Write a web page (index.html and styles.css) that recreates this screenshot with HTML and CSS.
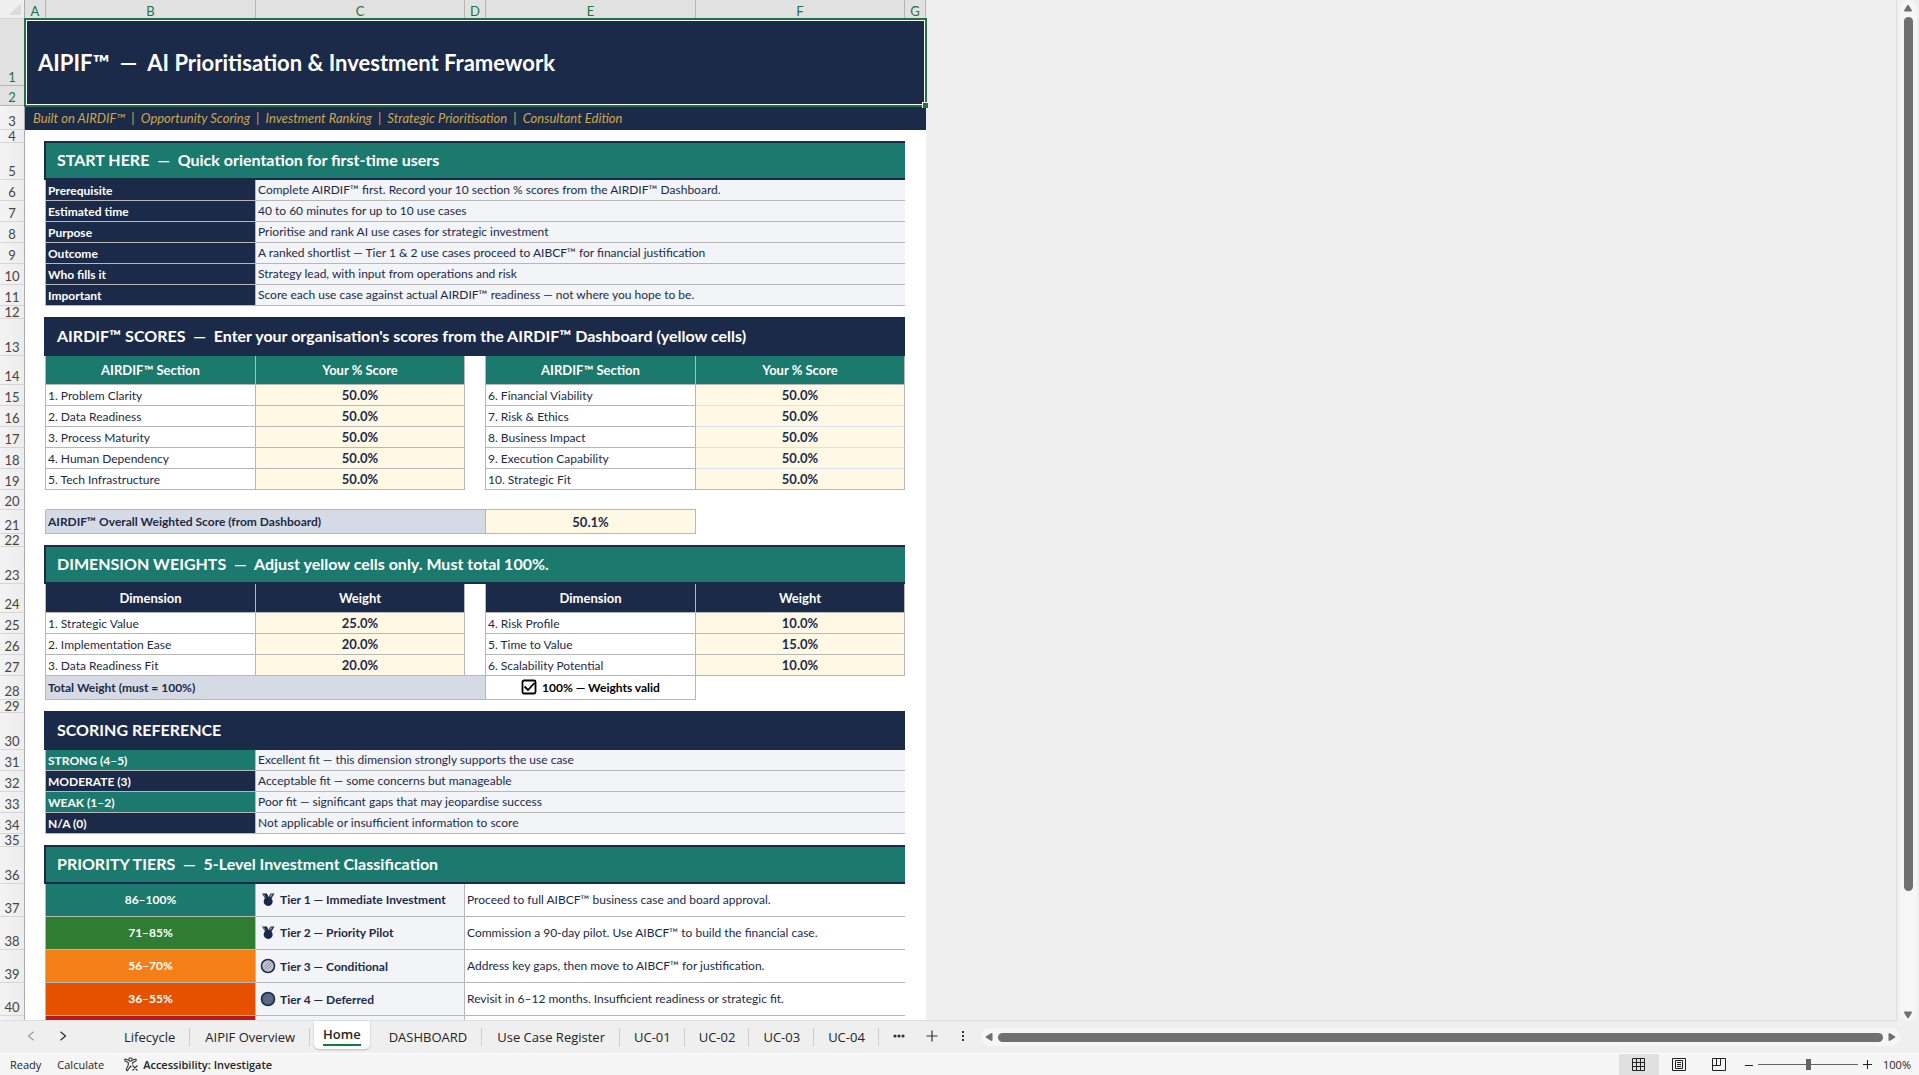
FILE: index.html
```html
<!DOCTYPE html>
<html lang="en">
<head>
<meta charset="utf-8">
<title>AIPIF – Home</title>
<link rel="stylesheet" href="styles.css">
</head>
<body>
<svg class="defs" aria-hidden="true">
  <symbol id="medal" viewBox="0 0 14 14">
    <path d="M1 0.5h5l1.5 3.5L9.5 0.5h4L10.5 5.5A4.5 4.5 0 1 1 4 5.3z" fill="#1c2a4a"/>
    <path d="M9.8 1.3h2L9.7 4.3l-1.200-.5z" fill="#8d95a8"/>
    <path d="M2.500 1.300l2.300 3" stroke="#7a849b" fill="none"/>
  </symbol>
  <symbol id="disc" viewBox="0 0 16 16">
    <circle cx="8" cy="8" r="6.500" fill="currentColor" stroke="#1c2a4a" stroke-width="1.600"/>
    <path d="M3.500 9.500l6-6M4.500 11.500l7-7M6.500 12.500l6-6" stroke="#6f7d92" stroke-width=".7"/>
  </symbol>
</svg>
<main class="workspace">
  <div class="sheet">
    <table class="grid">
      <colgroup>
        <col class="c-num"><col class="c-gap"><col class="c-wide"><col class="c-mid"><col class="c-gap"><col class="c-wide"><col class="c-mid"><col class="c-gap">
      </colgroup>
      <thead>
        <tr class="letters"><th class="corner"><svg width="12" height="12" viewBox="0 0 12 12"><path d="M12 0v12H0z" fill="#dcdcdc"/></svg></th><th>A</th><th>B</th><th>C</th><th>D</th><th>E</th><th>F</th><th>G</th></tr>
      </thead>
      <tbody>
        <tr class="h67 picked"><th>1</th><td class="title" colspan="7" rowspan="2">AIPIF™ &nbsp;—&nbsp; AI Prioritisation &amp; Investment Framework<span class="handle"></span></td></tr>
        <tr class="h20 picked"><th>2</th></tr>
        <tr class="h24"><th>3</th><td class="subtitle" colspan="7">Built on AIRDIF™ &nbsp;|&nbsp; Opportunity Scoring &nbsp;|&nbsp; Investment Ranking &nbsp;|&nbsp; Strategic Prioritisation &nbsp;|&nbsp; Consultant Edition</td></tr>
        <tr class="h13"><th>4</th><td colspan="7"></td></tr>

        <tr class="h37"><th>5</th><td></td><td class="bar teal" colspan="5">START HERE &nbsp;—&nbsp; Quick orientation for first-time users</td><td></td></tr>
        <tr class="h21"><th>6</th><td></td><td class="cell key navy">Prerequisite</td><td class="cell note" colspan="4">Complete AIRDIF™ first. Record your 10 section % scores from the AIRDIF™ Dashboard.</td><td></td></tr>
        <tr class="h21"><th>7</th><td></td><td class="cell key navy">Estimated time</td><td class="cell note" colspan="4">40 to 60 minutes for up to 10 use cases</td><td></td></tr>
        <tr class="h21"><th>8</th><td></td><td class="cell key navy">Purpose</td><td class="cell note" colspan="4">Prioritise and rank AI use cases for strategic investment</td><td></td></tr>
        <tr class="h21"><th>9</th><td></td><td class="cell key navy">Outcome</td><td class="cell note" colspan="4">A ranked shortlist — Tier 1 &amp; 2 use cases proceed to AIBCF™ for financial justification</td><td></td></tr>
        <tr class="h21"><th>10</th><td></td><td class="cell key navy">Who fills it</td><td class="cell note" colspan="4">Strategy lead, with input from operations and risk</td><td></td></tr>
        <tr class="h21"><th>11</th><td></td><td class="cell key navy">Important</td><td class="cell note" colspan="4">Score each use case against actual AIRDIF™ readiness — not where you hope to be.</td><td></td></tr>
        <tr class="h13"><th>12</th><td colspan="7"></td></tr>

        <tr class="h37"><th>13</th><td></td><td class="bar navy" colspan="5">AIRDIF™ SCORES &nbsp;—&nbsp; Enter your organisation's scores from the AIRDIF™ Dashboard (yellow cells)</td><td></td></tr>
        <tr class="h29"><th>14</th><td></td><td class="cell head teal">AIRDIF™ Section</td><td class="cell head teal">Your % Score</td><td></td><td class="cell head teal">AIRDIF™ Section</td><td class="cell head teal">Your % Score</td><td></td></tr>
        <tr class="h21"><th>15</th><td></td><td class="cell item">1. Problem Clarity</td><td class="cell score">50.0%</td><td></td><td class="cell item">6. Financial Viability</td><td class="cell score soft">50.0%</td><td></td></tr>
        <tr class="h21"><th>16</th><td></td><td class="cell item">2. Data Readiness</td><td class="cell score">50.0%</td><td></td><td class="cell item">7. Risk &amp; Ethics</td><td class="cell score soft">50.0%</td><td></td></tr>
        <tr class="h21"><th>17</th><td></td><td class="cell item">3. Process Maturity</td><td class="cell score">50.0%</td><td></td><td class="cell item">8. Business Impact</td><td class="cell score soft">50.0%</td><td></td></tr>
        <tr class="h21"><th>18</th><td></td><td class="cell item">4. Human Dependency</td><td class="cell score">50.0%</td><td></td><td class="cell item">9. Execution Capability</td><td class="cell score soft">50.0%</td><td></td></tr>
        <tr class="h21"><th>19</th><td></td><td class="cell item">5. Tech Infrastructure</td><td class="cell score">50.0%</td><td></td><td class="cell item">10. Strategic Fit</td><td class="cell score">50.0%</td><td></td></tr>
        <tr class="h20"><th>20</th><td colspan="7"></td></tr>
        <tr class="h24"><th>21</th><td></td><td class="cell total topped" colspan="3">AIRDIF™ Overall Weighted Score (from Dashboard)</td><td class="cell score topped">50.1%</td><td></td><td></td></tr>
        <tr class="h13"><th>22</th><td colspan="7"></td></tr>

        <tr class="h37"><th>23</th><td></td><td class="bar teal" colspan="5">DIMENSION WEIGHTS &nbsp;—&nbsp; Adjust yellow cells only. Must total 100%.</td><td></td></tr>
        <tr class="h29"><th>24</th><td></td><td class="cell head navy">Dimension</td><td class="cell head navy">Weight</td><td></td><td class="cell head navy">Dimension</td><td class="cell head navy">Weight</td><td></td></tr>
        <tr class="h21"><th>25</th><td></td><td class="cell item">1. Strategic Value</td><td class="cell score">25.0%</td><td></td><td class="cell item">4. Risk Profile</td><td class="cell score">10.0%</td><td></td></tr>
        <tr class="h21"><th>26</th><td></td><td class="cell item">2. Implementation Ease</td><td class="cell score">20.0%</td><td></td><td class="cell item">5. Time to Value</td><td class="cell score">15.0%</td><td></td></tr>
        <tr class="h21"><th>27</th><td></td><td class="cell item">3. Data Readiness Fit</td><td class="cell score">20.0%</td><td></td><td class="cell item">6. Scalability Potential</td><td class="cell score">10.0%</td><td></td></tr>
        <tr class="h24"><th>28</th><td></td><td class="cell total topped" colspan="3">Total Weight (must = 100%)</td><td class="cell valid"><svg width="16" height="16" viewBox="0 0 16 16" fill="none" stroke="#000" stroke-width="1.800"><rect x="1.500" y="1.500" width="13" height="13" rx="1.500"/><path d="M3.500 7.500l3.500 3.500 6.500-7"/></svg>100% — Weights valid</td><td></td><td></td></tr>
        <tr class="h13"><th>29</th><td colspan="7"></td></tr>

        <tr class="h37"><th>30</th><td></td><td class="bar navy" colspan="5">SCORING REFERENCE</td><td></td></tr>
        <tr class="h21"><th>31</th><td></td><td class="cell key teal">STRONG (4–5)</td><td class="cell note" colspan="4">Excellent fit — this dimension strongly supports the use case</td><td></td></tr>
        <tr class="h21"><th>32</th><td></td><td class="cell key navy">MODERATE (3)</td><td class="cell note" colspan="4">Acceptable fit — some concerns but manageable</td><td></td></tr>
        <tr class="h21"><th>33</th><td></td><td class="cell key teal">WEAK (1–2)</td><td class="cell note" colspan="4">Poor fit — significant gaps that may jeopardise success</td><td></td></tr>
        <tr class="h21"><th>34</th><td></td><td class="cell key navy">N/A (0)</td><td class="cell note" colspan="4">Not applicable or insufficient information to score</td><td></td></tr>
        <tr class="h13"><th>35</th><td colspan="7"></td></tr>

        <tr class="h37"><th>36</th><td></td><td class="bar teal" colspan="5">PRIORITY TIERS &nbsp;—&nbsp; 5-Level Investment Classification</td><td></td></tr>
        <tr class="h33"><th>37</th><td></td><td class="cell band teal">86–100%</td><td class="cell tier"><svg class="ico" width="16" height="14"><use href="#medal"/></svg>Tier 1 — Immediate Investment</td><td class="cell desc" colspan="3">Proceed to full AIBCF™ business case and board approval.</td><td></td></tr>
        <tr class="h33"><th>38</th><td></td><td class="cell band green">71–85%</td><td class="cell tier"><svg class="ico" width="16" height="14"><use href="#medal"/></svg>Tier 2 — Priority Pilot</td><td class="cell desc" colspan="3">Commission a 90-day pilot. Use AIBCF™ to build the financial case.</td><td></td></tr>
        <tr class="h33"><th>39</th><td></td><td class="cell band amber">56–70%</td><td class="cell tier"><svg class="ico light" width="16" height="16"><use href="#disc"/></svg>Tier 3 — Conditional</td><td class="cell desc" colspan="3">Address key gaps, then move to AIBCF™ for justification.</td><td></td></tr>
        <tr class="h33"><th>40</th><td></td><td class="cell band orange">36–55%</td><td class="cell tier"><svg class="ico dark" width="16" height="16"><use href="#disc"/></svg>Tier 4 — Deferred</td><td class="cell desc" colspan="3">Revisit in 6–12 months. Insufficient readiness or strategic fit.</td><td></td></tr>
        <tr class="h33"><th></th><td></td><td class="cell band red"></td><td class="cell tier"></td><td class="cell desc" colspan="3"></td><td></td></tr>
      </tbody>
    </table>
  </div>
  <div class="vscroll">
    <svg width="10" height="8" viewBox="0 0 10 8"><path d="M5 0.500Q5.500 .5 9 6.500Q9 7.500 8 7.500H2Q1 7.500 1 6.500Q4.500 .5 5 .5z" fill="#707070"/></svg>
    <span class="thumb"></span><span class="rest"></span>
    <svg width="10" height="8" viewBox="0 0 10 8"><path d="M5 7.500Q5.500 7.500 9 1.500Q9 .5 8 .5H2Q1 .5 1 1.500Q4.500 7.500 5 7.500z" fill="#707070"/></svg>
  </div>
</main>
<nav class="tabbar">
  <div class="arrows">
    <button aria-label="Previous sheets" disabled><svg width="8" height="10" viewBox="0 0 8 10"><path d="M6.500 .8L1.500 5l5 4.200" fill="none" stroke="#9a9a9a" stroke-width="1.200"/></svg></button>
    <button aria-label="Next sheets"><svg width="8" height="10" viewBox="0 0 8 10"><path d="M1.500 .8L6.500 5l-5 4.200" fill="none" stroke="#333" stroke-width="1.300"/></svg></button>
  </div>
  <button class="tab">Lifecycle</button>
  <button class="tab">AIPIF Overview</button>
  <button class="tab current"><span>Home</span></button>
  <button class="tab">DASHBOARD</button>
  <button class="tab">Use Case Register</button>
  <button class="tab short">UC-01</button>
  <button class="tab short">UC-02</button>
  <button class="tab short">UC-03</button>
  <button class="tab short">UC-04</button>
  <button class="tool more" aria-label="More sheets"><svg width="12" height="4" viewBox="0 0 12 4"><g fill="#333"><circle cx="2" cy="2" r="1.600"/><circle cx="6" cy="2" r="1.600"/><circle cx="10" cy="2" r="1.600"/></g></svg></button>
  <button class="tool add" aria-label="New sheet"><svg width="12" height="12" viewBox="0 0 12 12"><path d="M6 .5v11M.5 6h11" stroke="#333" stroke-width="1.200"/></svg></button>
  <button class="tool grip" aria-label="Resize tabs"><svg width="2" height="10" viewBox="0 0 2 10"><path d="M0 0h2v2H0zM0 4h2v2H0zM0 8h2v2H0z" fill="#333"/></svg></button>
  <div class="hscroll">
    <svg width="8" height="10" viewBox="0 0 8 10"><path d="M.5 5Q.5 4.500 6.500 1Q7.500 1 7.500 2V8Q7.500 9 6.500 9Q.5 5.500 .5 5z" fill="#707070"/></svg>
    <span class="thumb"></span>
    <svg width="8" height="10" viewBox="0 0 8 10"><path d="M7.500 5Q7.500 4.500 1.500 1Q.5 1 .5 2V8Q.5 9 1.500 9Q7.500 5.500 7.500 5z" fill="#707070"/></svg>
  </div>
</nav>
<footer class="status">
  <span>Ready</span>
  <span>Calculate</span>
  <button class="access"><svg width="15" height="15" viewBox="0 0 15 15" fill="none" stroke="#333" stroke-width="1.100"><circle cx="6.500" cy="2.500" r="1.700"/><path d="M4.800 3.300L2 2.200Q.8 2 .8 3T1.500 4.200L4.300 5.500V8L2.300 12.300Q2.200 13.800 3.500 13.600L6.500 9.200 7.300 10.300M8.200 3.300L11 2.200Q12.200 2 12.200 3T11.500 4.200L8.700 5.500V7.500M8.500 8.500l5 5M13.500 8.500l-5 5"/></svg>Accessibility: Investigate</button>
  <div class="views">
    <button class="on" aria-label="Normal"><svg width="14" height="14" viewBox="0 0 14 14" fill="none" stroke="#222"><path d="M.5 .5h12v12H.5zM4.500 .5v12M8.500 .5v12M.5 4.500h12M.5 8.500h12"/></svg></button>
    <button aria-label="Page layout"><svg width="14" height="14" viewBox="0 0 14 14" fill="none" stroke="#222"><path d="M.5 .5h13v12H.5zM3.500 2.500h7v8h-7zM5 4.500h4M5 6.500h4M5 8.500h4"/></svg></button>
    <button aria-label="Page break preview"><svg width="14" height="14" viewBox="0 0 14 14" fill="none" stroke="#222"><path d="M.5 .5h13v12H.5zM4.500 .5v7M8.500 .5v7M.5 7.500h8"/></svg></button>
  </div>
  <div class="zoom">
    <button aria-label="Zoom out"><svg width="8" height="8" viewBox="0 0 8 8"><path d="M0 4.500h8" stroke="#222"/></svg></button>
    <input type="range" min="0" max="100" value="50" aria-label="Zoom">
    <button aria-label="Zoom in"><svg width="9" height="9" viewBox="0 0 9 9"><path d="M0 4.500h9M4.500 0v9" stroke="#222"/></svg></button>
    <span class="pct">100%</span>
  </div>
</footer>
</body>
</html>
```
FILE: styles.css
```css
* { box-sizing: border-box; }
html, body { height: 100%; }
body {
  margin: 0;
  display: flex;
  flex-direction: column;
  overflow: hidden;
  background: #efefef;
  color: #242424;
  font-family: "Open Sans", "Noto Sans", sans-serif;
  font-size: 11px;
}
button { border: 0; padding: 0; background: none; font: inherit; color: inherit; }
svg { display: block; }
.defs { position: absolute; width: 0; height: 0; }

/* worksheet area */
.workspace { flex: 1; min-height: 0; display: flex; }
.sheet {
  flex: 1;
  min-width: 0;
  overflow: hidden;
  border-right: 1px solid #dedede;
  border-bottom: 1px solid #dedede;
}
.grid {
  width: 926px;
  table-layout: fixed;
  border-collapse: separate;
  border-spacing: 0;
  background: #fff;
  font-family: Lato, "Open Sans", sans-serif;
  font-size: 12px;
  line-height: 16px;
  color: #1c2a4a;
}
.c-num { width: 25px; }
.c-gap { width: 21px; }
.c-wide { width: 210px; }
.c-mid { width: 209px; }
.grid th, .grid td { padding: 0; white-space: nowrap; text-align: left; }
.grid tr > th:first-child {
  background: linear-gradient(90deg, #f3f3f3, #ededed);
  border-right: 1px solid #ababab;
  border-bottom: 1px solid #d6d6d6;
  color: #444;
  font-size: 13px;
  font-weight: 400;
  text-align: center;
  vertical-align: bottom;
}
.grid .h13 > th:first-child { line-height: 12px; }
.grid .picked > th:first-child { background: #e1e1e1; color: #1f7246; border-color: #b5b5b5; }
.letters { height: 19px; }
.letters th {
  padding-top: 2px;
  background: #e1e1e1;
  border-right: 1px solid #b5b5b5;
  color: #1f7246;
  font-size: 13px;
  font-weight: 400;
}
.grid .letters th { padding-top: 2px; text-align: center; }
.grid .letters .corner { padding-top: 0; background: #efefef; vertical-align: middle; }
.corner svg { margin-left: 9px; }

.h13 { height: 13px; }
.h20 { height: 20px; }
.h21 { height: 21px; }
.h24 { height: 24px; }
.h29 { height: 29px; }
.h33 { height: 33px; }
.h37 { height: 37px; }
.h67 { height: 67px; }

.grid .title {
  position: relative;
  padding-left: 13px;
  background: #1c2a4a;
  color: #fff;
  font-size: 22px;
  font-weight: 700;
  line-height: 28px;
  outline: 2px solid #1f7246;
  outline-offset: -1px;
  box-shadow: inset 0 0 0 2px #fff;
}
.handle {
  position: absolute;
  right: -2px;
  bottom: -2px;
  z-index: 1;
  width: 6px;
  height: 6px;
  background: #1f7246;
  border: 1px solid #fff;
  border-width: 1px 0 0 1px;
}
.grid .subtitle { padding-left: 8px; background: #1c2a4a; color: #c9a84c; font-size: 13px; font-style: italic; }
.grid .bar {
  padding-left: 11px;
  padding-bottom: 1px;
  border-bottom: 2px solid #1c2a4a;
  box-shadow: -2px 0 #1c2a4a, 0 -2px #1c2a4a, -2px -2px #1c2a4a;
  color: #fff;
  font-size: 16px;
  font-weight: 700;
  line-height: 20px;
}
.grid .cell {
  padding-left: 2px;
  border-right: 1px solid #b7b7b7;
  border-bottom: 1px solid #b7b7b7;
  box-shadow: -1px 0 #b7b7b7;
}
.grid .item, .grid .key { padding-top: 2px; }
.grid .topped { box-shadow: -1px 0 #b7b7b7, 0 -1px #b7b7b7; }
.grid .note { background: #f2f4f8; border-right: 0; }
.grid .desc { border-right: 0; }
.key, .band, .head { color: #fff; font-weight: 700; }
.grid .head, .grid .band, .grid .score { padding-left: 0; text-align: center; font-weight: 700; }
.grid .head, .grid .score { font-size: 13px; }
.grid .score { background: #fff8e5; }
.grid .soft { border-bottom-color: #d9e2f0; }
.grid .total { background: #d6dae4; font-weight: 700; }
.grid .valid { padding-left: 0; color: #000; font-weight: 700; text-align: center; }
.valid svg { display: inline-block; margin-right: 5px; vertical-align: -3px; }
.grid .tier { padding-left: 4px; background: #f2f4f8; font-weight: 700; }
.ico { display: inline-block; margin-right: 4px; vertical-align: -3px; }
.light { color: #c3c5d2; }
.dark { color: #56647c; }
.navy { background: #1c2a4a; }
.teal { background: #1b7a6d; }
.green { background: #2e7d32; }
.amber { background: #f57f17; }
.orange { background: #e65100; }
.red { background: #b71c1c; }

/* scrollbars */
.thumb { background: #707070; border-radius: 5px; }
.vscroll {
  width: 18px;
  margin: 0 2px 0 2px;
  padding: 4px 0 2px;
  display: flex;
  flex-direction: column;
  align-items: center;
  background: #f6f6f6;
  border-radius: 9px;
}
.vscroll .thumb { width: 9px; margin-top: 5px; flex: 87; }
.vscroll .rest { flex: 12; }
.hscroll {
  flex: 1;
  height: 18px;
  margin: 7px 19px 0 0;
  padding: 0 4px;
  display: flex;
  align-items: center;
  gap: 5px;
  background: #f6f6f6;
  border-radius: 9px;
}
.hscroll .thumb { flex: 1; height: 9px; }

/* sheet tabs */
.tabbar { display: flex; height: 33px; border-bottom: 1px solid #fff; font-size: 13px; }
.arrows { display: flex; width: 109px; padding: 0 0 2px 27px; gap: 24px; }
.tab { position: relative; flex: none; padding: 0 15px; line-height: 20px; }
.tab.short { padding: 0 14px; }
.tab:not(.current)::after { content: ""; position: absolute; right: 0; top: 7px; width: 1px; height: 18px; background: #cdcdcd; }
.tab.current {
  height: 28px;
  margin: 0 4px;
  padding: 0 9px;
  background: #fff;
  border-radius: 0 0 5px 5px;
  box-shadow: 0 1px 2px #bbb;
  font-weight: 600;
}
.tab.current span { display: block; border-bottom: 2px solid #107c41; }
.tool { display: flex; align-items: center; justify-content: center; padding-bottom: 2px; }
.more { width: 40px; }
.add { width: 26px; }
.grip { width: 36px; }

/* status bar */
.status { display: flex; align-items: center; height: 21px; padding: 0 8px 0 10px; background: #f5f5f5; }
.status > span { margin-right: 16px; }
.access { display: flex; align-items: center; gap: 4px; margin-left: 4px; font-weight: 600; }
.views { display: flex; align-self: stretch; margin-left: auto; }
.views button { display: flex; align-items: center; justify-content: center; width: 40px; }
.views .on { background: #e0e0e0; }
.zoom { display: flex; align-items: center; gap: 5px; margin-left: 6px; }
.zoom input { appearance: none; width: 100px; height: 12px; margin: 0; background: linear-gradient(#666, #666) center / 100% 1px no-repeat; }
.zoom input::-webkit-slider-thumb { appearance: none; width: 5px; height: 11px; background: #666; }
.pct { width: 29px; margin-left: 5px; text-align: right; }
```
